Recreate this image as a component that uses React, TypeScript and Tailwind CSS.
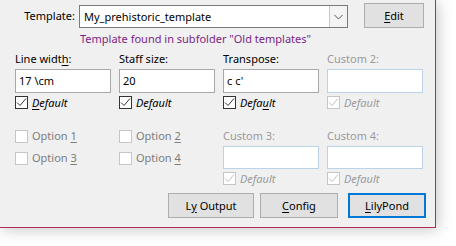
import React from "react";

const font = { fontFamily: '"Segoe UI", "Noto Sans", sans-serif' };

const Check = ({ checked, disabled }: { checked?: boolean; disabled?: boolean }) => (
  <span
    className={`flex w-[13px] h-[13px] shrink-0 items-center justify-center border bg-white ${
      disabled ? "border-[#c6c6c6]" : "border-[#333333]"
    }`}>
    {checked && (
      <svg width="11" height="11" viewBox="0 0 11 11">
        <path
          d="M1 5.5 L4 8.5 L10 1.5"
          fill="none"
          stroke={disabled ? "#c0c0c0" : "#333333"}
          strokeWidth="1"
        />
      </svg>
    )}
  </span>
);

// label with one underlined access-key letter
const Key = ({ text, at }: { text: string; at: number }) => (
  <>
    {text.slice(0, at)}
    <span className="underline underline-offset-2">{text[at]}</span>
    {text.slice(at + 1)}
  </>
);

const Field = ({ value, disabled }: { value?: string; disabled?: boolean }) => (
  <div
    className={`w-[96px] h-[24px] bg-white border flex items-center pl-[3px] text-black ${
      disabled ? "border-[#bcd1ea]" : "border-[#a9a9a9]"
    }`}>
    {value}
  </div>
);

const DefaultBox = ({ at, disabled }: { at?: number; disabled?: boolean }) => (
  <div className="flex items-center gap-[4px] mt-[3px] h-[13px]">
    <Check checked disabled={disabled} />
    <span className={`italic ${disabled ? "text-[#9a9a9a]" : "text-black"}`}>
      {at === undefined ? "Default" : <Key text="Default" at={at} />}
    </span>
  </div>
);

const Option = ({ n }: { n: number }) => (
  <div className="flex items-center gap-[4px] h-[16px]">
    <Check disabled />
    <span className="text-[#7d7d7d]">
      Option <span className="underline underline-offset-2">{n}</span>
    </span>
  </div>
);

export default function App() {
  return (
    <div className="w-[456px] h-[246px] bg-white overflow-hidden text-[11px] leading-[16px]" style={font}>
      <div className="w-[436px] h-[228px] bg-[#f0f0f0] border-r border-b border-[#b72a60] shadow-[2px_2px_14px_rgba(0,0,0,0.22)] flex flex-col">
        {/* template row */}
        <div className="flex h-[46px]">
          <div className="w-[79px] pr-[4px] text-right pt-[8px] text-black">Template:</div>
          <div className="flex flex-col w-[269px] pt-[5px]">
            <div className="h-[23px] bg-white border border-[#7a7a7a] flex items-center">
              <span className="flex-1 pl-[4px] text-black">My_prehistoric_template</span>
              <span className="w-[18px] h-[21px] border-l border-[#c8c8c8] bg-[#f3f3f3] flex items-center justify-center">
                <svg width="9" height="6" viewBox="0 0 9 6">
                  <path d="M0.5 1 L4.5 5 L8.5 1" fill="none" stroke="#555" strokeWidth="1" />
                </svg>
              </span>
            </div>
            <div className="mt-[3px] pl-[1px] text-[#7b1f86] whitespace-nowrap">
              Template found in subfolder "Old templates"
            </div>
          </div>
          <button className="ml-[16px] mt-[3px] w-[60px] h-[25px] bg-[#e1e1e1] border border-[#adadad] text-black">
            <Key text="Edit" at={0} />
          </button>
        </div>

        {/* first grid row */}
        <div className="grid grid-cols-[96px_96px_96px_96px] gap-x-[8px] pl-[15px] pt-[5px]">
          <div>
            <div className="mb-[2px] text-black">
              <Key text="Line width:" at={9} />
            </div>
            <Field value="17 \cm" />
            <DefaultBox at={0} />
          </div>
          <div>
            <div className="mb-[2px] text-black">Staff size:</div>
            <Field value="20" />
            <DefaultBox at={2} />
          </div>
          <div>
            <div className="mb-[2px] text-black">Transpose:</div>
            <Field value="c c'" />
            <DefaultBox at={4} />
          </div>
          <div>
            <div className="mb-[2px] text-[#9a9a9a]">Custom 2:</div>
            <Field disabled />
            <DefaultBox disabled />
          </div>
        </div>

        {/* second grid row */}
        <div className="grid grid-cols-[96px_96px_96px_96px] gap-x-[8px] pl-[15px] mt-[19px]">
          <div className="flex flex-col gap-[6px]">
            <Option n={1} />
            <Option n={3} />
          </div>
          <div className="flex flex-col gap-[6px]">
            <Option n={2} />
            <Option n={4} />
          </div>
          <div>
            <div className="mb-[2px] text-[#9a9a9a]">Custom 3:</div>
            <div className="w-[96px] h-[23px] bg-white border border-[#bcd1ea]" />
            <DefaultBox disabled />
          </div>
          <div>
            <div className="mb-[2px] text-[#9a9a9a]">Custom 4:</div>
            <div className="w-[96px] h-[23px] bg-white border border-[#bcd1ea]" />
            <DefaultBox disabled />
          </div>
        </div>

        {/* buttons */}
        <div className="flex justify-end pr-[9px] mt-[8px] text-black">
          <button className="w-[86px] h-[25px] bg-[#e1e1e1] border border-[#adadad]">
            <Key text="Ly Output" at={1} />
          </button>
          <button className="ml-[6px] w-[78px] h-[25px] bg-[#e1e1e1] border border-[#adadad]">
            <Key text="Config" at={0} />
          </button>
          <button className="ml-[10px] w-[78px] h-[25px] bg-[#e1e1e1] border-2 border-[#0078d7]">
            <Key text="LilyPond" at={0} />
          </button>
        </div>
      </div>
    </div>
  );
}
